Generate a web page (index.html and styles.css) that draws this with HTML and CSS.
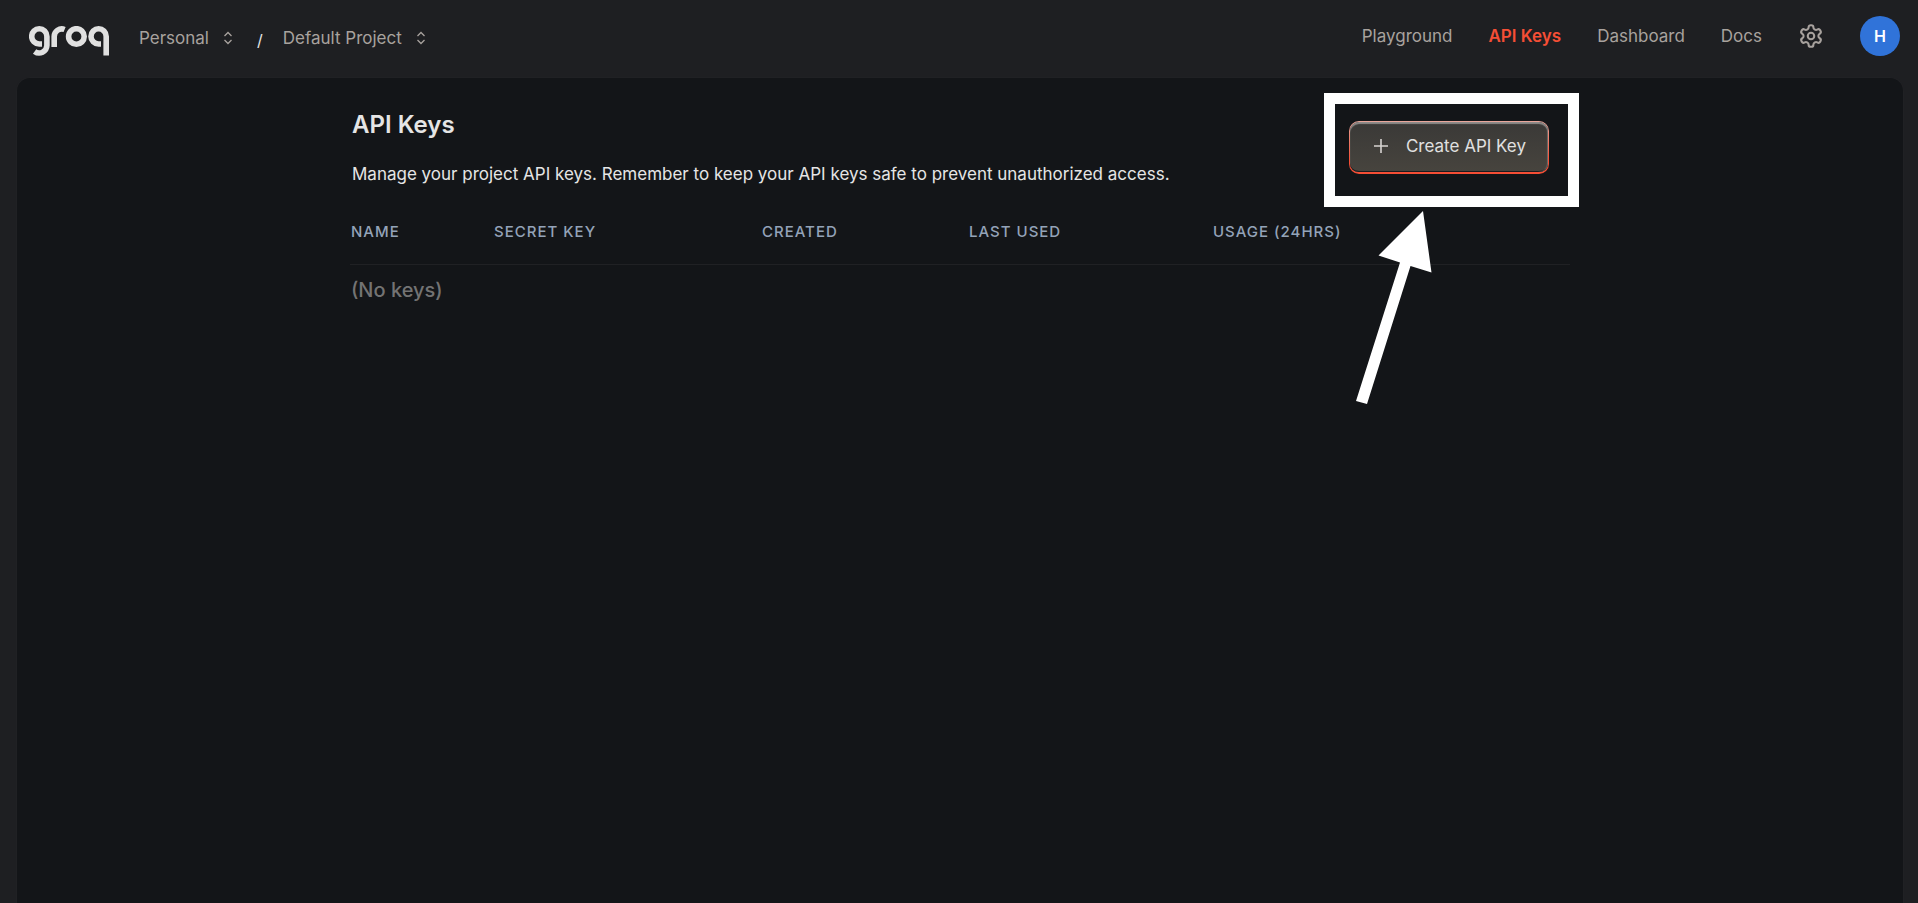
FILE: index.html
```html
<!DOCTYPE html>
<html lang="en">
<head>
  <meta charset="UTF-8" />
  <meta name="viewport" content="width=device-width, initial-scale=1.0" />
  <title>API Keys - Groq</title>
  <link rel="stylesheet" href="styles.css">
</head>
<body>
  <header class="topbar">
    <div class="topbar-left">
      <a class="logo" href="#" aria-label="groq">
        <svg width="80" height="31" viewBox="0 0 80 31" fill="none" stroke="#e0e0e0" stroke-width="5.6">
          <path d="M13 18H10.3A7.6 7.6 0 1 1 17.9 10.4V19.5A7.7 7.7 0 0 1 5.6 25.4" />
          <path d="M25.2 21V10.6A7.6 7.6 0 0 1 35.6 3.5" />
          <circle cx="47.4" cy="10.5" r="7.8" />
          <path d="M72 18H69.6A7.6 7.6 0 1 1 77.2 10.4V29.6" />
        </svg>
      </a>
      <div class="switcher">
        <select class="switcher-select" aria-label="Organization">
          <option>Personal</option>
        </select>
        <svg class="switcher-icon" width="10" height="14" viewBox="0 0 10 14" fill="none" stroke="#a8a29e" stroke-width="1.3">
          <path d="M1.5 5L5 1.5L8.5 5M1.5 9L5 12.5L8.5 9" />
        </svg>
      </div>
      <span class="slash">/</span>
      <div class="switcher">
        <select class="switcher-select" aria-label="Project">
          <option>Default Project</option>
        </select>
        <svg class="switcher-icon" width="10" height="14" viewBox="0 0 10 14" fill="none" stroke="#a8a29e" stroke-width="1.3">
          <path d="M1.5 5L5 1.5L8.5 5M1.5 9L5 12.5L8.5 9" />
        </svg>
      </div>
    </div>
    <nav class="topbar-nav">
      <a href="#">Playground</a>
      <a href="#" class="active">API Keys</a>
      <a href="#">Dashboard</a>
      <a href="#">Docs</a>
      <button class="icon-btn" aria-label="Settings">
        <svg width="26" height="26" viewBox="0 0 24 24" fill="none" stroke="#a8a29e" stroke-width="1.9" stroke-linecap="round" stroke-linejoin="round">
          <path d="M12.22 2h-.44a2 2 0 0 0-2 2v.18a2 2 0 0 1-1 1.73l-.43.25a2 2 0 0 1-2 0l-.15-.08a2 2 0 0 0-2.73.73l-.22.38a2 2 0 0 0 .73 2.73l.15.1a2 2 0 0 1 1 1.72v.51a2 2 0 0 1-1 1.74l-.15.09a2 2 0 0 0-.73 2.73l.22.38a2 2 0 0 0 2.73.73l.15-.08a2 2 0 0 1 2 0l.43.25a2 2 0 0 1 1 1.73V20a2 2 0 0 0 2 2h.44a2 2 0 0 0 2-2v-.18a2 2 0 0 1 1-1.73l.43-.25a2 2 0 0 1 2 0l.15.08a2 2 0 0 0 2.73-.73l.22-.39a2 2 0 0 0-.73-2.73l-.15-.08a2 2 0 0 1-1-1.74v-.5a2 2 0 0 1 1-1.74l.15-.09a2 2 0 0 0 .73-2.73l-.22-.38a2 2 0 0 0-2.73-.73l-.15.08a2 2 0 0 1-2 0l-.43-.25a2 2 0 0 1-1-1.73V4a2 2 0 0 0-2-2z" />
          <circle cx="12" cy="12" r="3" />
        </svg>
      </button>
      <button class="avatar" aria-label="Account">H</button>
    </nav>
  </header>

  <main class="panel">
    <div class="content">
      <div class="page-head">
        <div>
          <h1>API Keys</h1>
          <p>Manage your project API keys. Remember to keep your API keys safe to prevent unauthorized access.</p>
        </div>
        <div class="create">
          <button class="create-btn">
            <svg width="14" height="14" viewBox="0 0 14 14" stroke="#d6d3d1" stroke-width="1.6">
              <path d="M7 0V14M0 7H14" />
            </svg>
            Create API Key
          </button>
          <div class="highlight"></div>
          <svg class="arrow" width="78" height="194" viewBox="0 0 78 194" fill="#fff">
            <path d="M68 0L76.500 61.500L55.500 55L12 193L1 190L45 51.500L23.500 44.500Z" />
          </svg>
        </div>
      </div>

      <table class="keys">
        <thead>
          <tr>
            <th class="col-name">Name</th>
            <th class="col-secret">Secret Key</th>
            <th class="col-created">Created</th>
            <th class="col-used">Last Used</th>
            <th>Usage (24hrs)</th>
          </tr>
        </thead>
        <tbody>
          <tr>
            <td colspan="5">(No keys)</td>
          </tr>
        </tbody>
      </table>
    </div>
  </main>
</body>
</html>
```
FILE: styles.css
```css
* {
  box-sizing: border-box;
}
body {
  margin: 0;
  min-height: 100vh;
  display: flex;
  flex-direction: column;
  background-color: #1e1f22;
  color: #e5e5e5;
  font-family: Inter, sans-serif;
  font-size: 18px;
}
button,
select {
  font-family: inherit;
  cursor: pointer;
}
.topbar {
  display: flex;
  justify-content: space-between;
  align-items: flex-start;
  padding: 16px 18px 0 29px;
  height: 77px;
}
.topbar-left {
  display: flex;
  align-items: center;
  margin-top: 6px;
  height: 32px;
}
.logo {
  display: flex;
  margin: 6px 30px 0 0;
}
.switcher {
  display: flex;
  align-items: center;
  gap: 14px;
}
.switcher-select {
  appearance: none;
  padding: 0;
  border: none;
  background: none;
  color: #a8a29e;
  font-size: 17px;
}
.slash {
  margin: 4px 20px 0 24px;
  font-size: 16px;
}
.topbar-nav {
  display: flex;
  align-items: center;
  gap: 36px;
}
.topbar-nav a {
  color: #a8a29e;
  font-size: 17px;
  text-decoration: none;
}
.topbar-nav a.active {
  color: #f54e35;
  font-weight: 600;
}
.icon-btn {
  display: flex;
  padding: 0;
  border: none;
  background: none;
}
.avatar {
  width: 40px;
  height: 40px;
  padding: 0;
  border: none;
  border-radius: 50%;
  background-color: #3073d9;
  color: #fff;
  font-size: 16px;
  font-weight: 600;
}
.panel {
  flex: 1;
  margin: 0 14px 0 16px;
  padding: 28px 24px;
  border: 1px solid #202124;
  border-bottom: none;
  border-radius: 14px 14px 0 0;
  background-color: #131518;
}
.content {
  max-width: 1220px;
  margin: 0 auto;
}
.page-head {
  display: flex;
  justify-content: space-between;
  padding: 0 21px 0 2px;
}
h1 {
  margin: 4px 0 18px;
  font-size: 24px;
  font-weight: 600;
  line-height: 30px;
}
p {
  margin: 0;
  font-size: 17px;
  line-height: 32px;
}
.create {
  position: relative;
  height: 53px;
  margin-top: 15px;
}
.create-btn {
  display: flex;
  align-items: center;
  gap: 18px;
  height: 53px;
  padding: 0 22px 2px 24px;
  border: 1px solid transparent;
  border-bottom-width: 2px;
  border-radius: 10px;
  background:
    linear-gradient(#3a3937, #47443e) padding-box,
    linear-gradient(#e9a79c, #f54e35 75%) border-box;
  box-shadow: inset 0 2px 1px #8d8b89, inset -1px 0 1px #6b6966, inset 0 -1px 0 #131518;
  color: #e0e0e0;
  font-size: 17px;
}
/* callout around the create button */
.highlight {
  position: absolute;
  inset: -28px -30px -33px -25px;
  border: 11px solid #fff;
  pointer-events: none;
}
.arrow {
  position: absolute;
  left: 6px;
  top: 90px;
  pointer-events: none;
}
.keys {
  width: 100%;
  margin-top: 30px;
  border-collapse: collapse;
  table-layout: fixed;
  text-align: left;
}
.keys th {
  padding: 0 1px 20px;
  border-bottom: 1px solid #202124;
  color: #94a3b8;
  font-size: 15px;
  font-weight: 500;
  line-height: 24px;
  letter-spacing: 1px;
  text-transform: uppercase;
}
.keys td {
  padding: 12px 1px;
  color: #737373;
  font-size: 20px;
  font-weight: 500;
  line-height: 26px;
}
.col-name {
  width: 143px;
}
.col-secret {
  width: 268px;
}
.col-created {
  width: 207px;
}
.col-used {
  width: 244px;
}
```
